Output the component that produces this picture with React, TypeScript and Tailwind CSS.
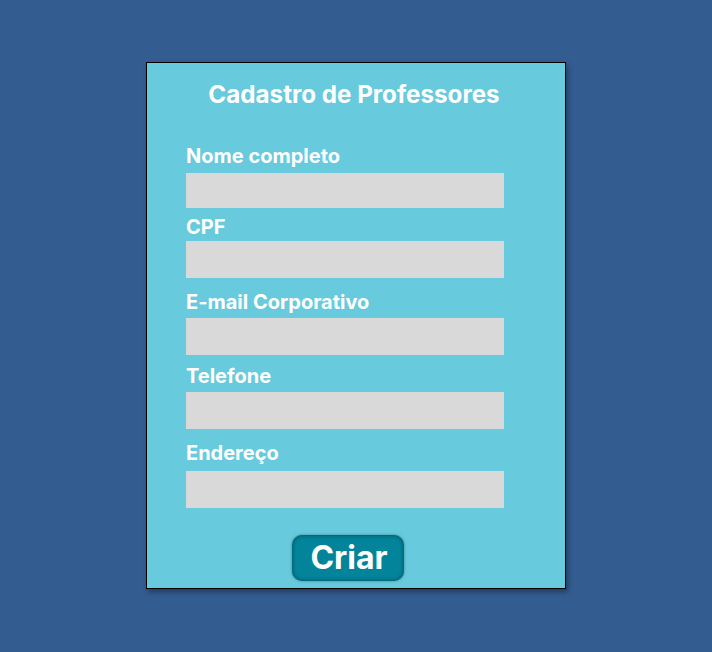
const fields = [
  { label: 'Nome completo', labelClass: 'mt-[34px]', inputClass: 'mt-[6px] h-[35px]' },
  { label: 'CPF', labelClass: 'mt-[8px]', inputClass: 'mt-[3px] h-[37px]' },
  { label: 'E-mail Corporativo', labelClass: 'mt-[13px]', inputClass: 'mt-[5px] h-[37px]' },
  { label: 'Telefone', labelClass: 'mt-[10px]', inputClass: 'mt-[5px] h-[37px]' },
  { label: 'Endereço', labelClass: 'mt-[13px]', inputClass: 'mt-[7px] h-[37px]' },
];

export default function App() {
  return (
    <div
      className="min-h-screen w-full flex justify-center items-start pt-[62px] bg-[#335c91]"
      style={{ fontFamily: 'Inter, "Noto Sans", sans-serif' }}
    >
      <div className="w-[420px] h-[527px] border border-black bg-[#67cadd] shadow-[2px_3px_5px_rgba(0,0,0,0.35)] flex flex-col pt-[16px] px-[39px]">
        <h1 className="text-center text-[24.2px] leading-[32px] font-bold text-white pr-[4px]">
          Cadastro de Professores
        </h1>

        {fields.map((f) => (
          <div key={f.label} className="flex flex-col">
            <label className={`text-[20px] leading-[22px] font-bold text-white ${f.labelClass}`}>
              {f.label}
            </label>
            <input
              type="text"
              className={`w-[318px] bg-[#d9d9d9] outline-none border-0 ${f.inputClass}`}
            />
          </div>
        ))}

        <button className="mt-[27px] ml-[106px] self-start w-[112px] h-[46px] rounded-[10px] bg-[#03849a] text-white text-[32px] font-bold leading-none flex items-center justify-center pl-[2px] shadow-[inset_0_0_4px_rgba(0,0,0,0.45),0_0_3px_rgba(0,0,0,0.35)]">
          Criar
        </button>
      </div>
    </div>
  );
}
